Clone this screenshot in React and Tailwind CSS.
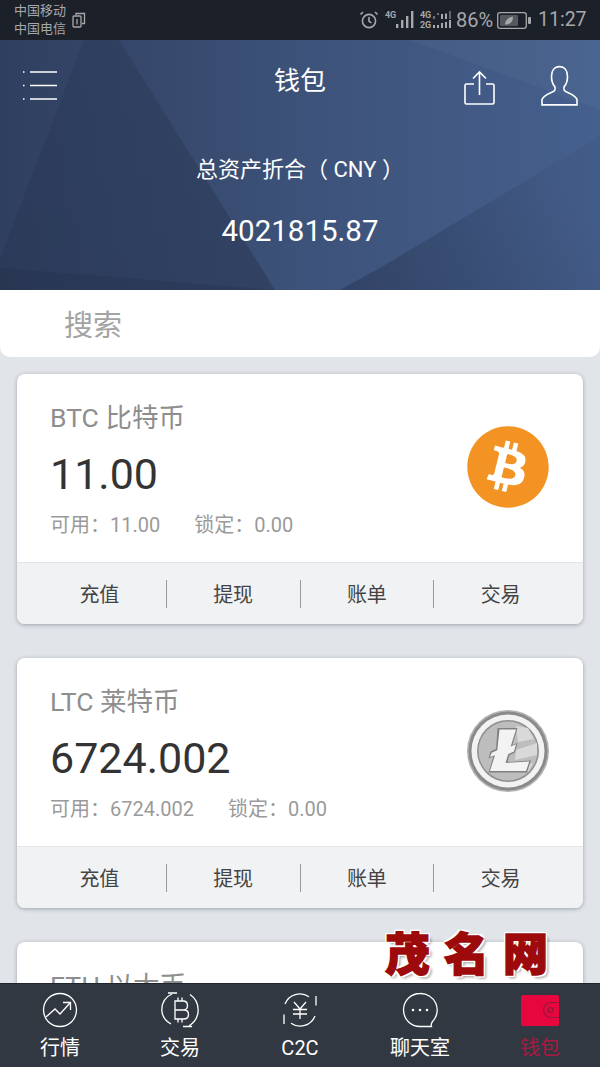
import React from "react";
import { FaBitcoin } from "react-icons/fa";

const cjk = "font-['Roboto','Noto_Sans_CJK_SC',sans-serif]";

const StatusBar = () => (
  <div className="flex h-10 shrink-0 items-center justify-between bg-[#1c2029] pl-[14px] pr-[14px] text-[#a6a8ab]">
    <div className="flex items-center gap-[6px]">
      <div className="text-[13px] leading-[18px]">
        <div>中国移动</div>
        <div>中国电信</div>
      </div>
      {/* dual sim icon */}
      <svg width="14" height="16" viewBox="0 0 14 16" fill="none" stroke="currentColor" strokeWidth="1.3">
        <rect x="1" y="4" width="8" height="11" rx="1" />
        <path d="M4 3V1.500h8.500v10H10" />
        <path d="M5 7v5.500" />
      </svg>
    </div>
    <div className="flex items-center">
      <svg width="20" height="20" viewBox="0 0 20 20" fill="none" stroke="currentColor" strokeWidth="1.6">
        <circle cx="10" cy="11" r="6.600" />
        <path d="M10 7v4.300l2.500 1.600M1.500 4.500 4 2M18.500 4.500 16 2" />
      </svg>
      <div className="relative ml-[6px] h-5 w-[29px]">
        <span className="absolute left-0 top-0 text-[9px] font-bold leading-[10px] tracking-tight">4G</span>
        <svg className="absolute left-[11px] top-[1px]" width="18" height="18" viewBox="0 0 18 18" fill="currentColor">
          <rect x="0" y="13" width="2.400" height="4" />
          <rect x="5" y="9" width="2.400" height="8" />
          <rect x="10" y="5" width="2.400" height="12" />
          <rect x="15" y="0" width="2.400" height="17" />
        </svg>
      </div>
      <div className="relative ml-[6px] h-5 w-[32px]">
        <span className="absolute left-0 top-0 text-[9px] font-bold leading-[10px] tracking-tight">4G<br />2G</span>
        <svg className="absolute left-[13px] top-[1px]" width="19" height="18" viewBox="0 0 19 18" fill="currentColor">
          <rect x="0" y="5" width="2" height="3" opacity=".6" />
          <rect x="4" y="2" width="2" height="2" opacity=".6" />
          <rect x="8" y="3" width="2" height="5" />
          <rect x="12" y="2.500" width="2" height="5.500" />
          <rect x="16" y="0" width="2" height="8" opacity=".5" />
          <rect x="0" y="14" width="2" height="3" />
          <rect x="4" y="14" width="2" height="3" />
          <rect x="8" y="12" width="2" height="5" />
          <rect x="12" y="11" width="2" height="6" />
          <rect x="16" y="9" width="2" height="8" />
        </svg>
      </div>
      <span className="ml-[4px] w-[36px] text-[20px] leading-none">86%</span>
      <svg className="ml-[5px]" width="34" height="17" viewBox="0 0 34 17" fill="none">
        <rect x=".7" y=".7" width="28.600" height="15.600" rx="2.400" stroke="currentColor" strokeWidth="1.300" />
        <rect x="3" y="3" width="18" height="11" rx="1" fill="#55585c" />
        <rect x="31" y="5" width="3" height="7" rx="1" fill="currentColor" />
        <path d="M8 12.500c0-4.500 3.500-7 8-8 0 4.500-2 8-8 8z" fill="#a6a8ab" />
      </svg>
      <span className="ml-[7px] w-[48px] text-[19.500px] leading-none">11:27</span>
    </div>
  </div>
);

const Header = () => (
  <div className="relative h-[250px] shrink-0 overflow-hidden bg-gradient-to-r from-[#2f3f5f] via-[#3d5279] to-[#45608e]">
    {/* faint facets in the header background */}
    <svg className="absolute inset-0" width="600" height="250" viewBox="0 0 600 250">
      <defs>
        <linearGradient id="facetRight" x1="0" y1="1" x2="1" y2="0.600">
          <stop offset="0" stopColor="#2a3857" stopOpacity=".6" />
          <stop offset="1" stopColor="#2a3857" stopOpacity="0.100" />
        </linearGradient>
        <linearGradient id="facetLeft" x1="0" y1="0" x2="1" y2="1">
          <stop offset="0" stopColor="#26334f" stopOpacity=".3" />
          <stop offset="1" stopColor="#26334f" stopOpacity=".5" />
        </linearGradient>
      </defs>
      <polygon points="84,0 119,0 275,250 0,250 0,218" fill="url(#facetLeft)" />
      <polygon points="0,228 275,250 0,250" fill="#1f2a44" opacity=".25" />
      <polygon points="600,96 385,225 340,250 600,250" fill="url(#facetRight)" />
      <polygon points="410,0 600,0 600,70" fill="#ffffff" opacity=".03" />
    </svg>
    <div className="relative flex h-20 items-start justify-between pl-[21px] pr-[22px] text-white">
      <svg className="mt-[30px]" width="38" height="31" viewBox="0 0 38 31" stroke="#fff" strokeWidth="1.600">
        <path d="M9 2h27M9 15.500h27M9 29h27" />
        <path d="M2 2h1.500M2 15.500h1.500M2 29h1.500" />
      </svg>
      <span className="absolute left-0 right-0 top-[26px] text-center text-[26px] leading-[30px]">钱包</span>
      <div className="mt-[25px] flex items-end gap-[45px]">
        <svg width="32" height="36" viewBox="0 0 32 36" fill="none" stroke="#fff" strokeWidth="1.600">
          <path d="M10 14H2.500A1.500 1.500 0 0 0 1 15.500v17A1.500 1.500 0 0 0 2.500 34h26a1.500 1.500 0 0 0 1.500-1.500v-17a1.500 1.500 0 0 0-1.500-1.500H22" />
          <path d="M15.500 25V2M9 8.500l6.500-6.500L22 8.500" />
        </svg>
        <svg width="37" height="41" viewBox="0 0 37 36" preserveAspectRatio="none" fill="none" stroke="#fff" strokeWidth="1.600">
          <path d="M18.500 1.500c-5 0-8 3.500-8 8.500 0 3.500 1 6.500 3 8.500.8 1 .8 3 0 4-2 2-11.500 3.500-12.500 8v4.500h35V30.500c-1-4.500-10.500-6-12.500-8-.8-1-.8-3 0-4 2-2 3-5 3-8.500 0-5-3-8.500-8-8.500z" />
        </svg>
      </div>
    </div>
    <div className="relative mt-[35px] text-center text-[22px] leading-[30px] text-white">总资产折合（ CNY ）</div>
    <div className="relative mt-[29px] text-center text-[29.500px] leading-[34px] text-white">4021815.87</div>
  </div>
);

const LitecoinIcon = () => (
  <svg width="84" height="84" viewBox="0 0 84 84">
    <circle cx="42" cy="42" r="41" fill="#b4b4b4" />
    <circle cx="42" cy="42" r="39.500" fill="#8a8a8a" />
    <circle cx="42" cy="42" r="36.500" fill="#f2f2f2" />
    <circle cx="42" cy="42" r="31" fill="#8f8f8f" />
    <circle cx="42" cy="42" r="29.500" fill="#bdbdbd" />
    {/* lighter stripes on the coin face */}
    <path d="M50 17 62 19 68 30 52 33zM50 41 71 34 71 46 49 51zM60 56 67 54 62 63z" fill="#d9d9d9" />
    <polygon points="31.500,19 51.500,19 46.500,36 51.500,34 49,43.500 43.500,46 41.500,53 65,51.500 61,63.500 22.500,63.500 27.500,47.500 22.500,49.500 24.500,42.500 30,40" fill="#808080" />
    <polygon points="33.500,20.500 50,20.500 44.700,37.500 50,35.200 48,42.500 42.300,45 39.500,54 63.300,52.500 60,62 24,62 29,46.300 24,48 25.700,43.700 31.300,41.300" fill="#f3f3f3" />
  </svg>
);

const Card = ({ title, amount, available, locked, icon }) => (
  <div className="mb-[34px] h-[250px] shrink-0 overflow-hidden rounded-[8px] bg-white shadow-[0_1px_4px_rgba(70,80,95,0.45)]">
    <div className="relative h-[188px] pl-[33px]">
      <div className="pt-[29px] text-[26.500px] leading-[30px] text-[#8e8e8e]">{title}</div>
      <div className="mt-[16px] text-[43px] leading-[50px] text-[#333]">{amount}</div>
      <div className="mt-[14px] flex gap-[34px] text-[20px] leading-[24px] text-[#9a9a9a]">
        <span>可用：{available}</span>
        <span>锁定：{locked}</span>
      </div>
      <div className="absolute right-[33px] top-[51px]">{icon}</div>
    </div>
    <div className="flex h-[62px] items-center border-t border-[#e2e4e7] bg-[#f1f2f4] px-[16px] text-[20px] text-[#444]">
      {["充值", "提现", "账单", "交易"].map((label, i) => (
        <div
          key={label}
          className={`flex h-[28px] flex-1 items-center justify-center pt-[3px] ${i < 3 ? "border-r border-[#9a9a9a]" : ""}`}
        >
          {label}
        </div>
      ))}
    </div>
  </div>
);

const NavItem = ({ label, active, children }) => (
  <div className="flex w-[120px] flex-col items-center">
    <div className="flex h-[38px] items-center justify-center">{children}</div>
    <span className={`mt-[7px] text-[20px] leading-[24px] ${active ? "text-[#a81a40]" : "text-white"}`}>{label}</span>
  </div>
);

const BottomNav = () => (
  <div className="flex h-[84px] shrink-0 items-start border-t border-[#20242c] bg-[#323842] pt-[7px]">
    <NavItem label="行情">
      <svg width="36" height="36" viewBox="0 0 36 36" fill="none" stroke="#fff" strokeWidth="1.300">
        <circle cx="18" cy="18" r="16.500" />
        <path d="M4 25l9-8 5 5 10-11M21 10.500h7.500V18" />
      </svg>
    </NavItem>
    <NavItem label="交易">
      <svg width="38" height="38" viewBox="0 0 38 38" fill="none" stroke="#fff" strokeWidth="1.300">
        <path d="M10 33C3 29 .8 24 .8 19 .8 12 4 6 11 3M28 35c6-4 9.200-10 9.200-16 0-6-3-12-8.200-15.500" />
        <path d="M7 2h9M22 35.500h9" />
        <path d="M14 10h8c6 0 6 9 0 9h-8zM14 19h9c6 0 6 9 0 9h-9zM14 10v18M17 6.500V10M21 6.500V10M17 28v3.500M21 28v3.500" />
      </svg>
    </NavItem>
    <NavItem label="C2C">
      <svg width="36" height="36" viewBox="0 0 36 36" fill="none" stroke="#fff" strokeWidth="1.300">
        <path d="M3 12A16 16 0 0 1 27 4.800M33 24A16 16 0 0 1 9 31.200" />
        <path d="M34 4v9.500M2 32v-9.500" />
        <path d="M12 10l6 7 6-7M11 17.500h14M11 22h14M18 17v10" />
      </svg>
    </NavItem>
    <NavItem label="聊天室">
      <svg width="36" height="36" viewBox="0 0 36 36" fill="none" stroke="#fff" strokeWidth="1.300">
        <path d="M18 1.500a16.500 16.500 0 1 0 0 33h11.500c-.500-1.500-.500-3 1-5A16.500 16.500 0 0 0 18 1.500z" />
        <circle cx="11" cy="18" r="1.300" fill="#fff" stroke="none" />
        <circle cx="18" cy="18" r="1.300" fill="#fff" stroke="none" />
        <circle cx="25" cy="18" r="1.300" fill="#fff" stroke="none" />
      </svg>
    </NavItem>
    <NavItem label="钱包" active>
      <svg width="38" height="31" viewBox="0 0 38 31">
        <rect width="38" height="31" rx="2" fill="#e8063f" />
        <path d="M38 7.500H30a7.500 7.500 0 0 0 0 15h8" fill="#e8063f" stroke="#8d1a3c" strokeWidth="1.200" />
        <circle cx="29.500" cy="15" r="2.500" fill="none" stroke="#8d1a3c" strokeWidth="1.200" />
      </svg>
    </NavItem>
  </div>
);

const App = () => (
  <div className={`relative flex h-[1067px] w-[600px] flex-col overflow-hidden bg-[#e1e5e9] ${cjk}`}>
    <StatusBar />
    <Header />
    <div className="flex h-[67px] shrink-0 items-center rounded-b-[10px] bg-white pl-[64px] pt-[7px] text-[29px] text-[#a3a3a3]">
      搜索
    </div>
    <div className="flex min-h-0 flex-1 flex-col overflow-hidden px-[17px] pt-[17px]">
      <Card
        title="BTC 比特币"
        amount="11.00"
        available="11.00"
        locked="0.00"
        icon={<FaBitcoin className="text-[#f39324]" size={84} />}
      />
      <Card title="LTC 莱特币" amount="6724.002" available="6724.002" locked="0.00" icon={<LitecoinIcon />} />
      {/* third card runs under the tab bar, only its title shows */}
      <div className="h-[60px] shrink-0 rounded-t-[8px] bg-white pl-[33px] pt-[29px] text-[26.500px] leading-[30px] text-[#8e8e8e] shadow-[0_1px_4px_rgba(70,80,95,0.45)]">
        ETH 以太币
      </div>
    </div>
    <BottomNav />
    {/* watermark laid over the page */}
    <div className="absolute left-[385px] top-[923px] flex w-[163px] justify-between font-['Noto_Sans_CJK_SC',sans-serif] text-[45px] font-black leading-[58px] text-[#9c0a0c] [-webkit-text-stroke:1.500px_#9c0a0c] [text-shadow:2px_2px_0_#fff,-2px_-2px_0_#fff,2px_-2px_0_#fff,-2px_2px_0_#fff,3px_3px_3px_rgba(0,0,0,0.4)]">
      <span className="w-[45px]">茂</span>
      <span className="w-[45px]">名</span>
      <span className="w-[45px]">网</span>
    </div>
  </div>
);

export default App;
